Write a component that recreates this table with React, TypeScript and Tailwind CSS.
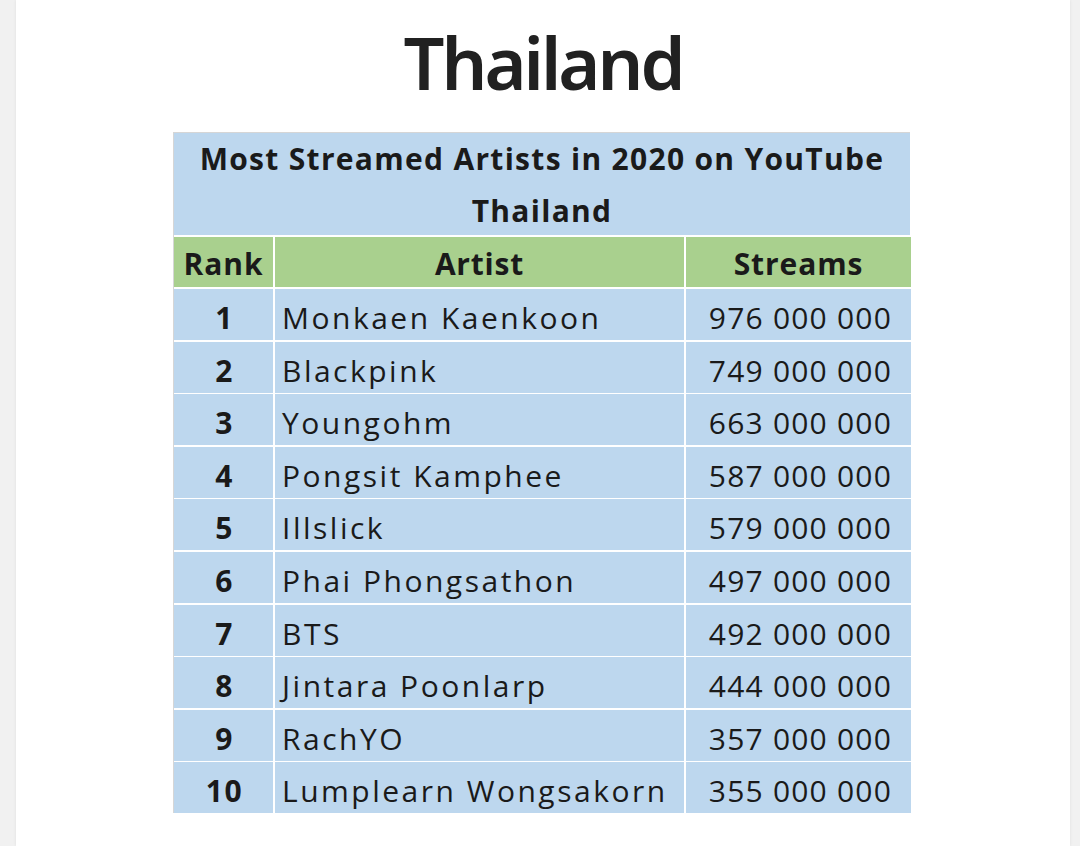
import React from "react";

const rows: [string, string, string][] = [
  ["1", "Monkaen Kaenkoon", "976 000 000"],
  ["2", "Blackpink", "749 000 000"],
  ["3", "Youngohm", "663 000 000"],
  ["4", "Pongsit Kamphee", "587 000 000"],
  ["5", "Illslick", "579 000 000"],
  ["6", "Phai Phongsathon", "497 000 000"],
  ["7", "BTS", "492 000 000"],
  ["8", "Jintara Poonlarp", "444 000 000"],
  ["9", "RachYO", "357 000 000"],
  ["10", "Lumplearn Wongsakorn", "355 000 000"],
];

export default function App() {
  return (
    <div className="w-[1080px] h-[846px] bg-[#f1f1f1] overflow-hidden">
      <div className="ml-[16px] w-[1054px] h-full bg-white flex flex-col shadow-[0_0_3px_rgba(0,0,0,0.08)]">
        <h1 className="mt-[12px] h-[100px] text-center text-[72px] leading-[100px] font-semibold text-[#212121] font-['Noto_Sans',sans-serif] tracking-[-3px]">
          Thailand
        </h1>
        <div className="mt-[20px] ml-[157px] w-[737px] bg-white border-t border-l border-[#d6d6d6] flex flex-col gap-[2px] font-['Open_Sans',sans-serif] text-[#1a1a1a]">
          <div className="h-[102px] pt-[2px] bg-[#bdd7ee] flex flex-col items-center justify-center font-bold text-[30px] leading-[52px] tracking-[1.3px]">
            <div>Most Streamed Artists in 2020 on YouTube</div>
            <div>Thailand</div>
          </div>
          <div className="grid grid-cols-[99px_409px_225px] gap-x-[2px] h-[50px] bg-white">
            <div className="bg-[#a9d08e] flex items-center justify-center pt-[3px] font-bold text-[30px] tracking-[1px]">Rank</div>
            <div className="bg-[#a9d08e] flex items-center justify-center pt-[3px] font-bold text-[30px] tracking-[0.8px]">Artist</div>
            <div className="bg-[#a9d08e] flex items-center justify-center pt-[3px] font-bold text-[30px] tracking-[0.9px]">Streams</div>
          </div>
          {rows.map(([r, a, s]) => (
            <div key={r} className="grid grid-cols-[99px_409px_225px] gap-x-[2px] h-[50.6px]">
              <div className="bg-[#bdd7ee] flex items-center justify-center pt-[6px] pl-[2px] font-bold text-[30px] tracking-[1.5px]">{r}</div>
              <div className="bg-[#bdd7ee] flex items-center pt-[6px] pl-[7px] text-[30px] tracking-[2.5px]">{a}</div>
              <div className="bg-[#bdd7ee] flex items-center justify-end pt-[6px] pr-[19px] text-[30px] tracking-[1.2px]">{s}</div>
            </div>
          ))}
        </div>
      </div>
    </div>
  );
}
